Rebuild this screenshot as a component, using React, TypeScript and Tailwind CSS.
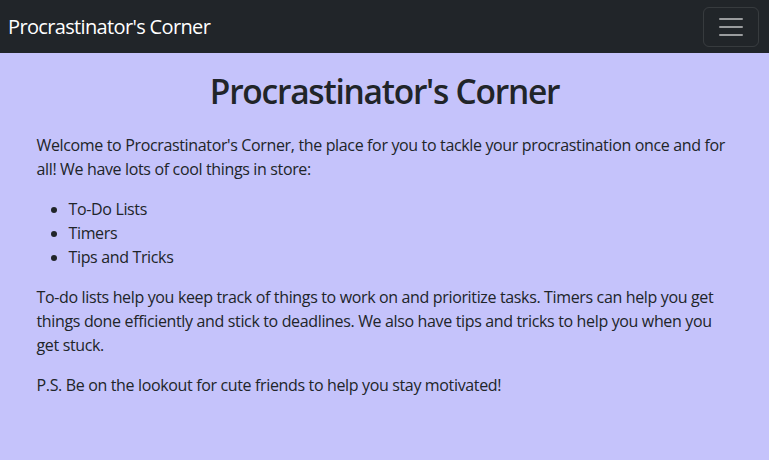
export default function App() {
  return (
    <div className="min-h-[460px] bg-[#c5c3fb] text-[#212529] font-['Open_Sans',sans-serif] tracking-[-0.35px]">
      <nav className="flex h-[53px] items-center justify-between bg-[#212529] pl-2 pr-[10px]">
        <a href="#" className="text-[20px] leading-[30px] tracking-[-0.65px] text-white">
          Procrastinator's Corner
        </a>
        <button className="flex h-[40px] w-[56px] items-center justify-center rounded-md border border-white/10">
          <svg width="30" height="30" viewBox="0 0 30 30">
            <path
              d="M4 7h22M4 15h22M4 23h22"
              stroke="rgba(255,255,255,0.55)"
              strokeWidth="2"
              strokeLinecap="round"
            />
          </svg>
        </button>
      </nav>
      <main className="mx-auto max-w-[720px] px-3">
        <h1 className="mt-[18px] mb-[22px] text-center text-[33.5px] leading-[40px] font-semibold tracking-[-1.25px]">
          Procrastinator's Corner
        </h1>
        <p className="mb-4 text-base leading-6">
          Welcome to Procrastinator's Corner, the place for you to tackle your procrastination once and for all! We have
          lots of cool things in store:
        </p>
        <ul className="mb-4 list-disc pl-8 text-base leading-6">
          <li>To-Do Lists</li>
          <li>Timers</li>
          <li>Tips and Tricks</li>
        </ul>
        <p className="mb-4 text-base leading-6">
          To-do lists help you keep track of things to work on and prioritize tasks. Timers can help you get things done
          efficiently and stick to deadlines. We also have tips and tricks to help you when you get stuck.
        </p>
        <p className="mb-4 text-base leading-6">P.S. Be on the lookout for cute friends to help you stay motivated!</p>
      </main>
    </div>
  );
}
